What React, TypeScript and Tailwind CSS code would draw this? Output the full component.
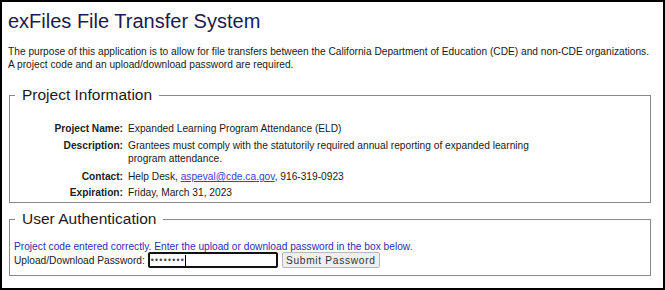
import React from "react";

export default function App() {
  return (
    <div className="w-[665px] h-[290px] overflow-hidden border-2 border-black bg-white pl-[6px] pt-[8px] font-['Liberation_Sans',Arial,sans-serif] text-[#1a1a1a]">
      <h1 className="text-[20px] leading-[23px] text-[#1b1b4f] font-normal">exFiles File Transfer System</h1>
      <p className="mt-[11.5px] text-[10.2px] leading-[13px]">
        The purpose of this application is to allow for file transfers between the California Department of Education (CDE) and non-CDE organizations.
        <br />
        A project code and an upload/download password are required.
      </p>

      <fieldset className="mt-[15.5px] ml-[1px] w-[642px] border border-[#888] pl-[4px] pr-[4px] pt-[17.5px] pb-[3px]">
        <legend className="ml-[1px] px-[7px] text-[15.5px] leading-[18px] text-[#1a1a1a]">Project Information</legend>
        <div className="flex flex-col text-[10.2px] leading-[13px]">
          <div className="flex gap-[5px]">
            <div className="w-[109px] shrink-0 text-right font-bold text-[#222]">Project Name:</div>
            <div className="w-[410px]">Expanded Learning Program Attendance (ELD)</div>
          </div>
          <div className="mt-[4px] flex gap-[5px]">
            <div className="w-[109px] shrink-0 text-right font-bold text-[#222]">Description:</div>
            <div className="w-[410px]">
              Grantees must comply with the statutorily required annual reporting of expanded learning program attendance.
            </div>
          </div>
          <div className="mt-[5.5px] flex gap-[5px]">
            <div className="w-[109px] shrink-0 text-right font-bold text-[#222]">Contact:</div>
            <div className="w-[410px]">
              Help Desk, <a href="#" className="text-[#3b43c4] underline">aspeval@cde.ca.gov</a>, 916-319-0923
            </div>
          </div>
          <div className="mt-[2.5px] flex gap-[5px]">
            <div className="w-[109px] shrink-0 text-right font-bold text-[#222]">Expiration:</div>
            <div className="w-[410px]">Friday, March 31, 2023</div>
          </div>
        </div>
      </fieldset>

      <fieldset className="mt-[7.5px] ml-[1px] w-[642px] border border-[#888] pl-[4px] pr-[4px] pt-[11.5px] pb-[6.5px]">
        <legend className="ml-[1px] px-[7px] text-[15.5px] leading-[18px] text-[#1a1a1a]">User Authentication</legend>
        <div className="text-[10.2px] leading-[13px] text-[#3030b0]">
          Project code entered correctly. Enter the upload or download password in the box below.
        </div>
        <div className="-mt-[0.5px] flex items-center text-[10.2px] leading-[13px]">
          <span>Upload/Download Password:</span>
          <div className="ml-[3px] flex h-[16px] w-[130px] items-center rounded-[2px] border-2 border-[#111] bg-white pl-[1px]">
            <span className="text-[8.5px] leading-[12px] tracking-[1.3px] text-[#444]">••••••••</span>
            <span className="h-[11px] w-[1.3px] bg-black"></span>
          </div>
          <button className="ml-[4px] h-[15.5px] w-[98px] rounded-[2px] border border-[#b8b8b8] bg-[#efefef] text-[10.2px] leading-[13px] tracking-[0.7px] text-[#333]">
            Submit Password
          </button>
        </div>
      </fieldset>
    </div>
  );
}
